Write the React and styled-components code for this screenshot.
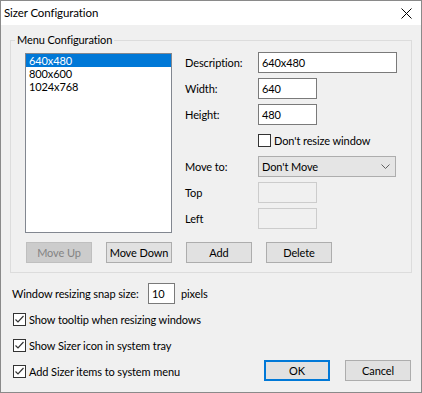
import React from 'react'
import styled, {createGlobalStyle} from "styled-components";

const GlobalStyle = createGlobalStyle `
  html, body {
    margin: 0;
    padding: 0;
    background: #f0f0f0;
  }
  body {
    font-family: Lato, "Liberation Sans", sans-serif;
    font-size: 11px;
    letter-spacing: -0.1px;
    color: #000;
  }
`;

const Window = styled.div `
  width: 422px;
  height: 393px;
  box-sizing: border-box;
  border: 1px solid #8a8a8a;
  background: #f0f0f0;
  display: flex;
  flex-direction: column;
  overflow: hidden;
`;

const TitleBar = styled.div `
  height: 24px;
  background: #fff;
  display: flex;
  align-items: center;
  justify-content: space-between;
  padding: 0 9px 0 3px;
  flex-shrink: 0;
`;

const TitleText = styled.span `
  font-size: 11.5px;
  line-height: 24px;
`;

const Body = styled.div `
  padding: 7px 9px 0 9px;
  display: flex;
  flex-direction: column;
`;

const Group = styled.fieldset `
  margin: 0;
  padding: 0 0 9px 0;
  border: 1px solid #dcdcdc;
  display: flex;
  flex-direction: column;
`;

const Legend = styled.legend `
  margin-left: 4px;
  padding: 0 2px;
  line-height: 16px;
`;

const TopArea = styled.div `
  display: flex;
  align-items: flex-start;
  padding: 4px 0 0 14px;
`;

const ListBox = styled.div `
  width: 147px;
  height: 180px;
  box-sizing: border-box;
  margin-top: 1px;
  border: 1px solid #828790;
  background: #fff;
  display: flex;
  flex-direction: column;
`;

const ListItem = styled.div `
  height: 13px;
  line-height: 13px;
  padding-left: 3px;
  background: ${ (props) => props.selected ? "#0078d7" : "transparent"};
  color: ${ (props) => props.selected ? "#fff" : "#000"};
`;

const Form = styled.div `
  margin-left: 13px;
  display: grid;
  grid-template-columns: 73px 139px;
  grid-auto-rows: 21px;
  row-gap: 5px;
  align-items: center;
`;

const Label = styled.span `
  line-height: 21px;
  white-space: nowrap;
`;

const Input = styled.div `
  width: ${ (props) => props.w}px;
  height: 21px;
  box-sizing: border-box;
  border: 1px solid ${ (props) => props.disabled ? "#cccccc" : "#7a7a7a"};
  background: ${ (props) => props.disabled ? "#f0f0f0" : "#fff"};
  padding-left: 3px;
  line-height: 19px;
`;

const Select = styled.div `
  width: 138px;
  height: 21px;
  box-sizing: border-box;
  border: 1px solid #adadad;
  background: #e5e5e5;
  display: flex;
  align-items: center;
  justify-content: space-between;
  padding: 0 5px 0 3px;
`;

const CheckRow = styled.label `
  display: flex;
  align-items: center;
  height: 21px;
  white-space: nowrap;
`;

const Box = styled.span `
  width: 13px;
  height: 13px;
  box-sizing: border-box;
  border: 1px solid #333;
  background: #fff;
  display: flex;
  align-items: center;
  justify-content: center;
  margin-right: 3px;
  flex-shrink: 0;
`;

const ButtonRow = styled.div `
  display: flex;
  gap: 14px;
  padding: 9px 0 0 15px;
`;

const Button = styled.button `
  width: 66px;
  height: 21px;
  box-sizing: border-box;
  margin: 0;
  padding: 0;
  white-space: nowrap;
  font-family: inherit;
  font-size: 11px;
  letter-spacing: -0.1px;
  color: ${ (props) => props.disabled ? "#838383" : "#000"};
  background: ${ (props) => props.disabled ? "#cccccc" : "#e1e1e1"};
  border: ${ (props) => props.primary ? "2px solid #0078d7" : props.disabled ? "1px solid #bfbfbf" : "1px solid #adadad"};
`;

const Footer = styled.div `
  display: flex;
  justify-content: space-between;
  align-items: flex-end;
  margin-top: 10px;
`;

const Options = styled.div `
  display: flex;
  flex-direction: column;
  gap: 5px;
  padding-left: 3px;
`;

const SnapRow = styled.div `
  display: flex;
  align-items: center;
  height: 21px;
  margin-left: -1px;
`;

const SnapLabel = styled.span `
  width: 136px;
  white-space: nowrap;
`;

const Unit = styled.span `
  margin-left: 6px;
`;

const DialogButtons = styled.div `
  display: flex;
  gap: 15px;
  margin: 0 1px 1px 0;
`;

const Check = ({checked}) => (
    <Box>
        {checked && (
            <svg width="11" height="11" viewBox="0 0 11 11">
                <path d="M1.5 5.5 L4 8 L9.5 2" fill="none" stroke="#333" strokeWidth="1.2"/>
            </svg>
        )}
    </Box>
)

const sizes = ["640x480", "800x600", "1024x768"];

const options = [
    "Show tooltip when resizing windows",
    "Show Sizer icon in system tray",
    "Add Sizer items to system menu"
];

const App = () => {
    return (
        <>
            <GlobalStyle/>
            <Window>
                <TitleBar>
                    <TitleText>Sizer Configuration</TitleText>
                    <svg width="11" height="11" viewBox="0 0 11 11">
                        <path d="M0.5 0.5 L10.5 10.5 M10.5 0.5 L0.5 10.5" stroke="#000" strokeWidth="1"/>
                    </svg>
                </TitleBar>
                <Body>
                    <Group>
                        <Legend>Menu Configuration</Legend>
                        <TopArea>
                            <ListBox>
                                {sizes.map((s, i) => (
                                    <ListItem key={s} selected={i === 0}>{s}</ListItem>
                                ))}
                            </ListBox>
                            <Form>
                                <Label>Description:</Label>
                                <Input w={139}>640x480</Input>
                                <Label>Width:</Label>
                                <Input w={59}>640</Input>
                                <Label>Height:</Label>
                                <Input w={59}>480</Input>
                                <span/>
                                <CheckRow><Check/>Don't resize window</CheckRow>
                                <Label>Move to:</Label>
                                <Select>
                                    <span>Don't Move</span>
                                    <svg width="9" height="5" viewBox="0 0 9 5">
                                        <path d="M0.5 0.5 L4.5 4.5 L8.5 0.5" fill="none" stroke="#606060" strokeWidth="1"/>
                                    </svg>
                                </Select>
                                <Label>Top</Label>
                                <Input w={59} disabled/>
                                <Label>Left</Label>
                                <Input w={59} disabled/>
                            </Form>
                        </TopArea>
                        <ButtonRow>
                            <Button disabled>Move Up</Button>
                            <Button>Move Down</Button>
                            <Button>Add</Button>
                            <Button>Delete</Button>
                        </ButtonRow>
                    </Group>
                    <Footer>
                        <Options>
                            <SnapRow>
                                <SnapLabel>Window resizing snap size:</SnapLabel>
                                <Input w={27}>10</Input>
                                <Unit>pixels</Unit>
                            </SnapRow>
                            {options.map((o) => (
                                <CheckRow key={o}><Check checked/>{o}</CheckRow>
                            ))}
                        </Options>
                        <DialogButtons>
                            <Button primary>OK</Button>
                            <Button>Cancel</Button>
                        </DialogButtons>
                    </Footer>
                </Body>
            </Window>
        </>
    );
};

export default App
